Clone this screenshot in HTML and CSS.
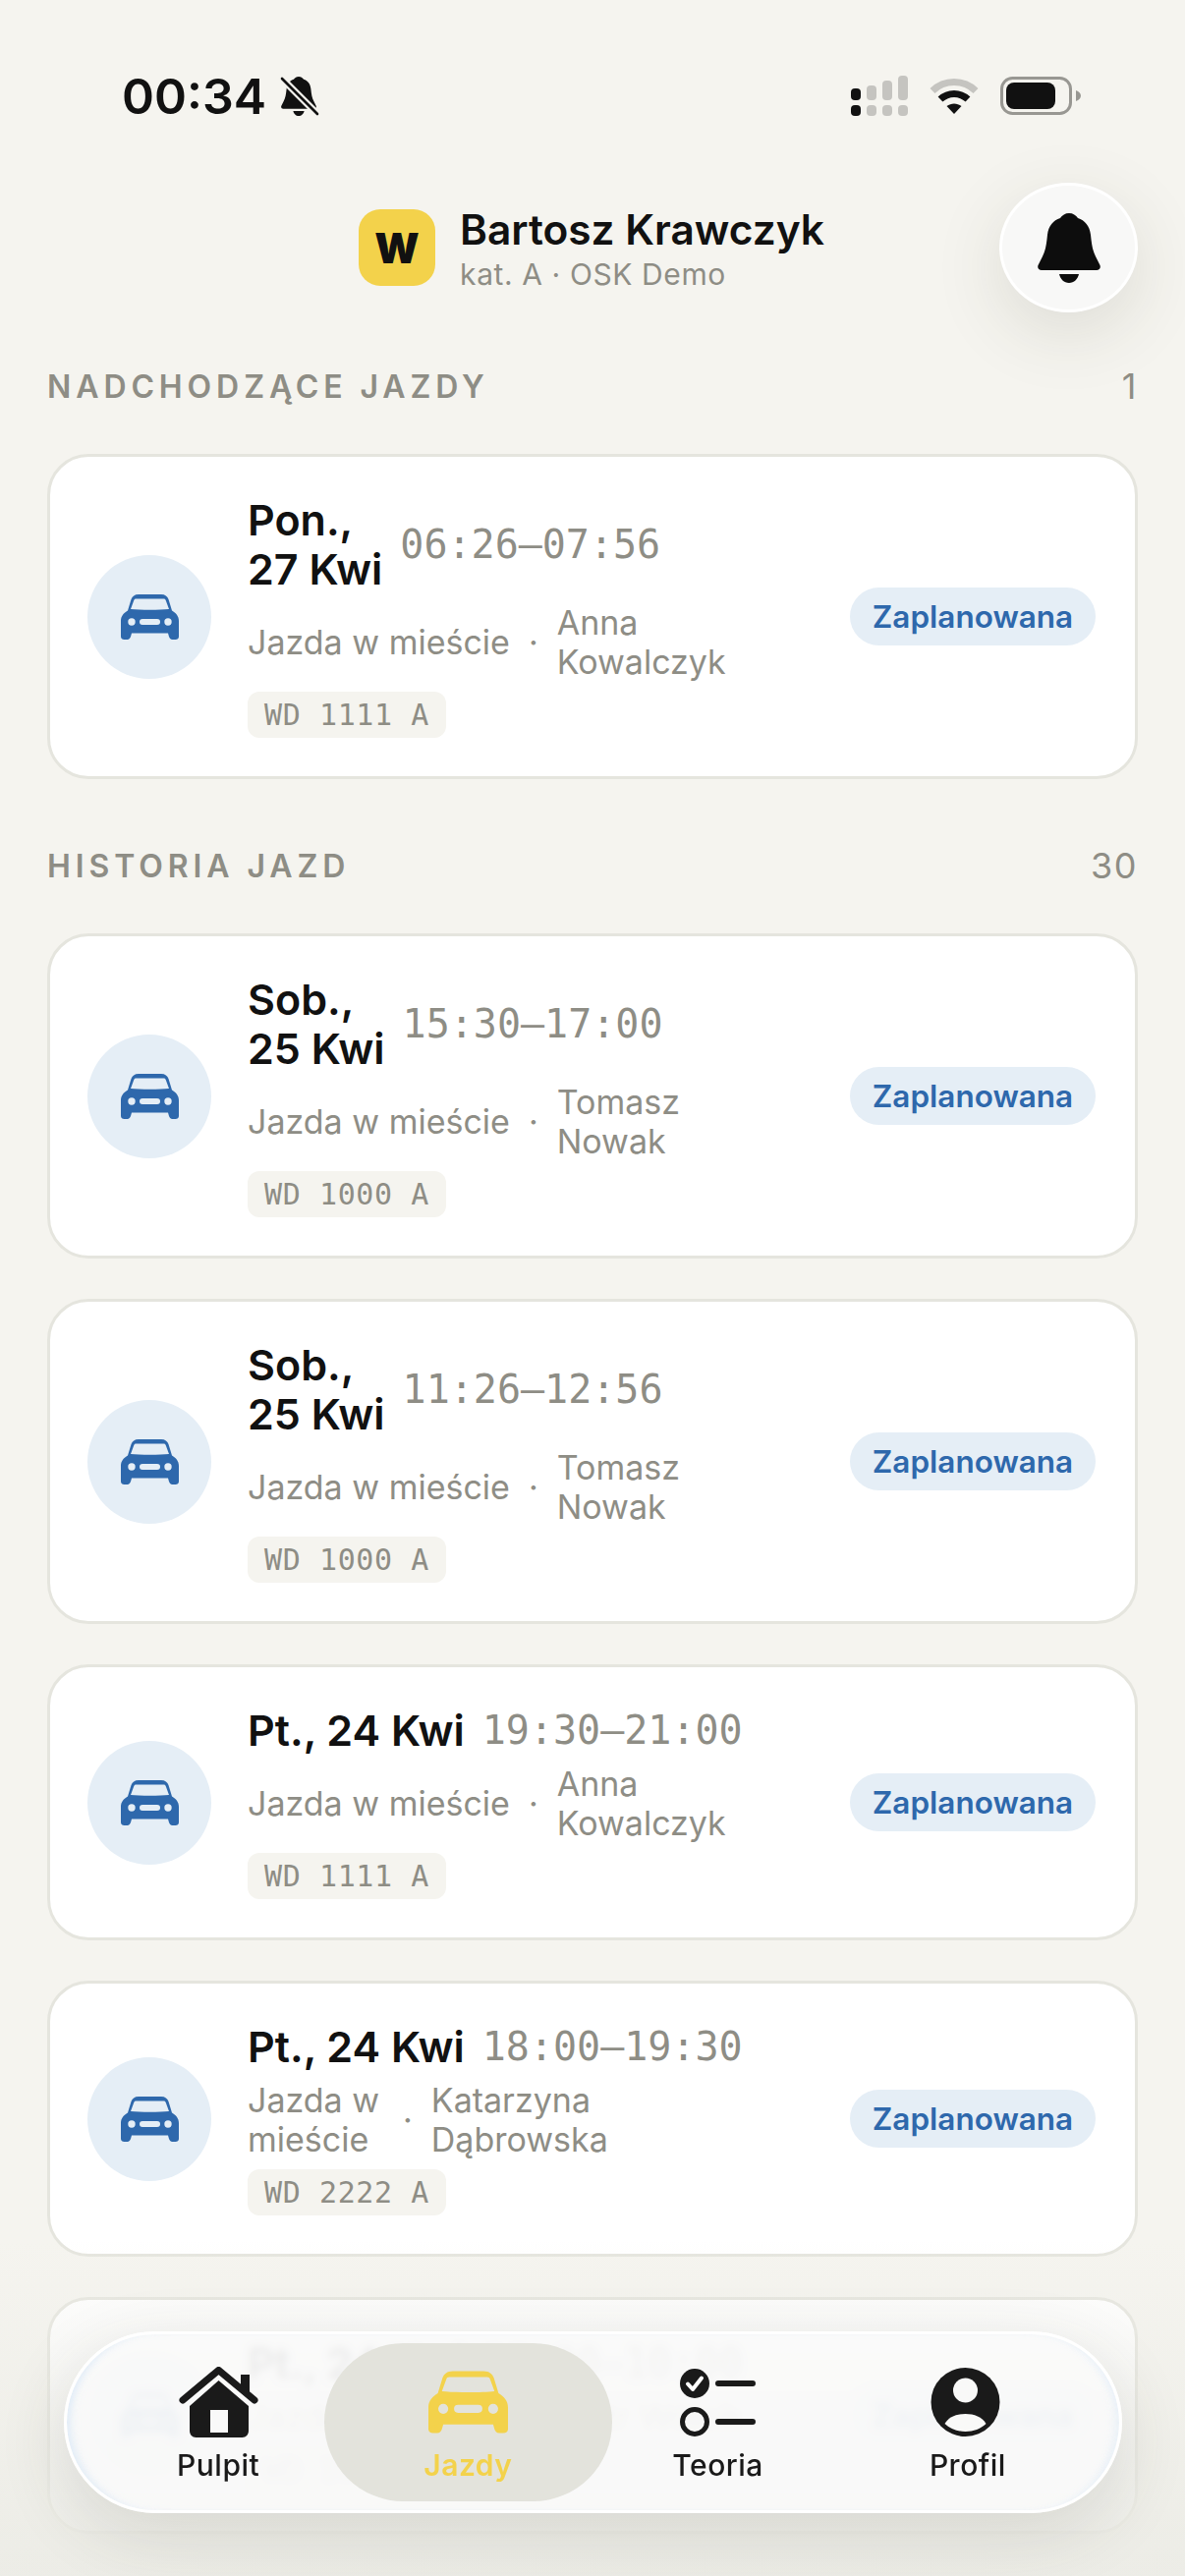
FILE: index.html
```html
<!DOCTYPE html>
<html lang="pl">
<head>
    <meta charset="UTF-8">
    <meta name="viewport" content="width=device-width, initial-scale=1.0">
    <title>Jazdy</title>
    <link rel="stylesheet" href="styles.css">
</head>
<body>
    <svg class="defs" width="0" height="0">
        <symbol id="car" viewBox="0 0 59 46">
            <path fill="currentColor" fill-rule="evenodd" d="M18 0H41C45 0 47.5 2 48.5 5L52 16.5C56 19 59 22 59 27V43C59 45 57.5 46 55.5 46H52.5C50.5 46 49.5 44.5 49 43L48 39.5H11L10 43C9.5 44.5 8.5 46 6.5 46H3.5C1.5 46 0 45 0 43V27C0 22 3 19 7 16.5L10.5 5C11.5 2 14 0 18 0ZM15.5 4.5C14.2 4.5 13.6 5 13.2 6.2L10 15C19 16 40 16 49 15L45.8 6.2C45.4 5 44.8 4.5 43.5 4.5ZM11 24.3A3.7 3.7 0 1 0 11 31.7A3.7 3.7 0 1 0 11 24.3ZM48 24.3A3.7 3.7 0 1 0 48 31.7A3.7 3.7 0 1 0 48 24.3ZM22 25A3 3 0 0 0 22 31H37A3 3 0 0 0 37 25Z"/>
        </symbol>
        <symbol id="bell" viewBox="0 0 64 71">
            <path fill="currentColor" d="M32 0C36 0 39 2 41 5C48 7 53 13 54 22C55 32 56 38 59 44L63 52C65 55 63 58 60 58H4C1 58 -1 55 1 52L5 44C8 38 9 32 10 22C11 13 16 7 23 5C25 2 28 0 32 0ZM22 62H42C41 67 37 71 32 71C27 71 23 67 22 62Z"/>
        </symbol>
    </svg>

    <div class="status-bar">
        <div class="status-left">
            <span class="clock">00:34</span>
            <svg class="mute" viewBox="0 0 40 42">
                <use href="#bell" x="1" y="1" width="36" height="40"/>
                <path d="M2 3L38 39" stroke="#f5f4ef" stroke-width="7"/>
                <path d="M2 3L38 39" stroke="#111" stroke-width="2.6" stroke-linecap="round"/>
            </svg>
        </div>
        <div class="status-right">
            <svg class="signal" viewBox="0 0 58 41">
                <g fill="#c5c4c0">
                    <rect x="16" y="10" width="10" height="15" rx="4"/>
                    <rect x="32" y="5" width="10" height="20" rx="4"/>
                    <rect x="48" y="0" width="10" height="25" rx="4"/>
                    <rect x="16" y="30" width="10" height="11" rx="4"/>
                    <rect x="32" y="30" width="10" height="11" rx="4"/>
                    <rect x="48" y="30" width="10" height="11" rx="4"/>
                </g>
                <rect x="0" y="13" width="10" height="12" rx="4" fill="#111"/>
                <rect x="0" y="30" width="10" height="11" rx="4" fill="#111"/>
            </svg>
            <svg class="wifi" viewBox="0 0 50 37">
                <path d="M3 13.5C15 1.5 35 1.5 47 13.5" fill="none" stroke="#c5c4c0" stroke-width="7"/>
                <path d="M11 22C19 14.5 31 14.5 39 22" fill="none" stroke="#111" stroke-width="7"/>
                <path d="M17.5 29C22 25.5 28 25.5 32.5 29L25 37Z" fill="#111"/>
            </svg>
            <svg class="battery" viewBox="0 0 82 39">
                <rect x="1.5" y="1.5" width="70" height="36" rx="11" fill="none" stroke="#989792" stroke-width="3"/>
                <rect x="6" y="6" width="50" height="27" rx="8" fill="#111"/>
                <path d="M77 14C80 15 82 17 82 19.5C82 22 80 24 77 25Z" fill="#989792"/>
            </svg>
        </div>
    </div>

    <header class="top">
        <div class="user">
            <div class="avatar">W</div>
            <div>
                <div class="user-name">Bartosz Krawczyk</div>
                <div class="user-sub">kat. A · OSK Demo</div>
            </div>
        </div>
        <button class="bell-btn"><svg class="bell-icon"><use href="#bell"/></svg></button>
    </header>

    <main class="list">
        <div class="section-head">
            <span class="section-title">NADCHODZĄCE JAZDY</span>
            <span class="section-count">1</span>
        </div>

        <div class="card">
            <div class="car-circle"><svg class="car"><use href="#car"/></svg></div>
            <div class="card-body">
                <div class="when"><span class="date">Pon.,<br>27 Kwi</span><span class="time">06:26–07:56</span></div>
                <div class="meta"><span>Jazda w mieście</span><i>·</i><span>Anna<br>Kowalczyk</span></div>
                <span class="plate">WD 1111 A</span>
            </div>
            <span class="badge">Zaplanowana</span>
        </div>

        <div class="section-head later">
            <span class="section-title">HISTORIA JAZD</span>
            <span class="section-count">30</span>
        </div>

        <div class="card">
            <div class="car-circle"><svg class="car"><use href="#car"/></svg></div>
            <div class="card-body">
                <div class="when"><span class="date">Sob.,<br>25 Kwi</span><span class="time">15:30–17:00</span></div>
                <div class="meta"><span>Jazda w mieście</span><i>·</i><span>Tomasz<br>Nowak</span></div>
                <span class="plate">WD 1000 A</span>
            </div>
            <span class="badge">Zaplanowana</span>
        </div>

        <div class="card">
            <div class="car-circle"><svg class="car"><use href="#car"/></svg></div>
            <div class="card-body">
                <div class="when"><span class="date">Sob.,<br>25 Kwi</span><span class="time">11:26–12:56</span></div>
                <div class="meta"><span>Jazda w mieście</span><i>·</i><span>Tomasz<br>Nowak</span></div>
                <span class="plate">WD 1000 A</span>
            </div>
            <span class="badge">Zaplanowana</span>
        </div>

        <div class="card">
            <div class="car-circle"><svg class="car"><use href="#car"/></svg></div>
            <div class="card-body">
                <div class="when"><span class="date">Pt., 24 Kwi</span><span class="time">19:30–21:00</span></div>
                <div class="meta"><span>Jazda w mieście</span><i>·</i><span>Anna<br>Kowalczyk</span></div>
                <span class="plate">WD 1111 A</span>
            </div>
            <span class="badge">Zaplanowana</span>
        </div>

        <div class="card">
            <div class="car-circle"><svg class="car"><use href="#car"/></svg></div>
            <div class="card-body">
                <div class="when"><span class="date">Pt., 24 Kwi</span><span class="time">18:00–19:30</span></div>
                <div class="meta"><span class="activity-wrapped">Jazda w<br>mieście</span><i>·</i><span>Katarzyna<br>Dąbrowska</span></div>
                <span class="plate">WD 2222 A</span>
            </div>
            <span class="badge">Zaplanowana</span>
        </div>

        <div class="card">
            <div class="car-circle"><svg class="car"><use href="#car"/></svg></div>
            <div class="card-body">
                <div class="when"><span class="date">Pt., 24 Kwi</span><span class="time">08:30–10:00</span></div>
                <div class="meta"><span>Jazda w mieście</span><i>·</i><span>Piotr Wójcik</span></div>
                <span class="plate">WD 1000 A</span>
            </div>
            <span class="badge">Zaplanowana</span>
        </div>
    </main>

    <div class="bottom-fade"></div>

    <nav class="tabbar">
        <div class="tab">
            <svg class="tab-icon" viewBox="0 0 81 72">
                <path fill="#1a1a1a" fill-rule="evenodd" d="M40.5 14L71 40V65C71 69 68.5 72 64.5 72H17.5C13.5 72 11 69 11 65V40ZM32 44V67H50V44Z"/>
                <path fill="#1a1a1a" d="M63 8H72V28L63 20Z"/>
                <path fill="none" stroke="#1a1a1a" stroke-width="7" stroke-linecap="round" stroke-linejoin="round" d="M4 34L40.5 3.5L77 34"/>
            </svg>
            <span>Pulpit</span>
        </div>
        <div class="tab active">
            <svg class="tab-car"><use href="#car"/></svg>
            <span>Jazdy</span>
        </div>
        <div class="tab">
            <svg class="tab-icon" viewBox="0 0 81 72">
                <circle cx="17" cy="17" r="15" fill="#1a1a1a"/>
                <path d="M10 17.5L15 23L24 11.5" fill="none" stroke="#fff" stroke-width="4" stroke-linecap="round" stroke-linejoin="round"/>
                <circle cx="17" cy="56" r="12.5" fill="none" stroke="#1a1a1a" stroke-width="5"/>
                <path d="M41 17H76M41 56H76" stroke="#1a1a1a" stroke-width="6" stroke-linecap="round"/>
            </svg>
            <span>Teoria</span>
        </div>
        <div class="tab">
            <svg class="tab-icon" viewBox="-3 -1 80 72">
                <circle cx="35" cy="35" r="35" fill="#1a1a1a"/>
                <circle cx="35" cy="23" r="12.5" fill="#f9f9f8"/>
                <path fill="#f9f9f8" d="M14 57C18 50 26 47 35 47C44 47 52 50 56 57C51 62 43 65 35 65C27 65 19 62 14 57Z"/>
            </svg>
            <span>Profil</span>
        </div>
    </nav>
</body>
</html>
```

FILE: styles.css
```css
* {
    box-sizing: border-box;
}

html, body {
    margin: 0;
    height: 2622px;
}

body {
    position: relative;
    overflow: hidden;
    background-color: #f5f4ef;
    color: #111;
    font-family: Inter, "Noto Sans", sans-serif;
}

.defs {
    position: absolute;
}

/* status bar */
.status-bar {
    display: flex;
    justify-content: space-between;
    align-items: flex-start;
    height: 186px;
    padding: 77px 106px 0 124px;
}

.status-left {
    display: flex;
    align-items: center;
    gap: 14px;
}

.clock {
    font-size: 50px;
    font-weight: 600;
    line-height: 42px;
}

.mute {
    width: 40px;
    height: 42px;
    color: #111;
}

.status-right {
    display: flex;
    align-items: center;
    gap: 22px;
}

.signal {
    width: 58px;
    height: 41px;
}

.wifi {
    width: 50px;
    height: 37px;
}

.battery {
    width: 82px;
    height: 39px;
}

/* header */
.top {
    display: flex;
    justify-content: center;
    position: relative;
    height: 132px;
    padding: 27px 2px 0 0;
}

.user {
    display: flex;
    gap: 25px;
    height: 78px;
    align-items: center;
}

.avatar {
    width: 78px;
    height: 78px;
    border-radius: 22px;
    background-color: #f3d24b;
    color: #111;
    font-size: 42px;
    font-weight: 900;
    display: flex;
    align-items: center;
    justify-content: center;
}

.user-name {
    font-size: 42.4px;
    font-weight: 600;
    line-height: 50px;
    padding-top: 3px;
}

.user-sub {
    font-size: 30px;
    line-height: 38px;
    letter-spacing: 0.6px;
    color: #8e8d85;
    margin-top: 1px;
}

.bell-btn {
    position: absolute;
    top: 0;
    right: 48px;
    width: 141px;
    height: 132px;
    border: 3px solid #fff;
    border-radius: 50%;
    background-color: #f8f8f7;
    box-shadow: 0 20px 70px rgba(60, 60, 40, 0.13);
    color: #0d0d0d;
    display: flex;
    align-items: center;
    justify-content: center;
    padding: 0;
}

.bell-icon {
    width: 64px;
    height: 71px;
}

/* list */
.list {
    padding: 55px 48px 0;
    display: flex;
    flex-direction: column;
    gap: 41px;
}

.section-head {
    display: flex;
    justify-content: space-between;
    align-items: center;
    height: 40px;
    margin-bottom: 8px;
}

.section-head.later {
    margin-top: 27px;
}

.section-title {
    font-size: 32px;
    font-weight: 600;
    letter-spacing: 4.9px;
    color: #8e8d85;
}

.section-count {
    font-size: 36px;
    letter-spacing: 1.5px;
    color: #8e8d85;
}

.card {
    display: flex;
    align-items: center;
    gap: 37px;
    padding: 39px 40px 39px 38px;
    background-color: #fff;
    border: 3px solid #e5e5de;
    border-radius: 42px;
}

.car-circle {
    flex: none;
    width: 126px;
    height: 126px;
    border-radius: 50%;
    background-color: #e5eef6;
    color: #2e68ac;
    display: flex;
    align-items: center;
    justify-content: center;
}

.car {
    width: 59px;
    height: 46px;
}

.card-body {
    flex: 1;
    display: flex;
    flex-direction: column;
    align-items: flex-start;
    gap: 10px;
}

.when {
    display: flex;
    align-items: center;
    gap: 18px;
}

.date {
    font-size: 43px;
    font-weight: 600;
    line-height: 50px;
}

.time {
    font-family: "DejaVu Sans Mono", monospace;
    font-size: 40px;
    color: #8e8d85;
}

.meta {
    display: flex;
    align-items: center;
    gap: 19px;
    font-size: 34px;
    line-height: 40px;
    color: #8e8d85;
}

.meta i {
    font-style: normal;
}

.activity-wrapped {
    width: 139px;
}

.plate {
    font-family: "DejaVu Sans Mono", monospace;
    font-size: 30px;
    line-height: 47px;
    letter-spacing: 0.6px;
    padding: 0 17px;
    border-radius: 12px;
    background-color: #f5f4ef;
    color: #8e8d85;
}

.badge {
    flex: none;
    width: 250px;
    height: 59px;
    border-radius: 30px;
    background-color: #e5eef6;
    color: #2e68ac;
    font-size: 31.5px;
    font-weight: 600;
    line-height: 59px;
    text-align: center;
}

/* bottom fade + tab bar */
.bottom-fade {
    position: absolute;
    left: 0;
    right: 0;
    top: 2280px;
    bottom: 0;
    background: linear-gradient(to bottom, rgba(238, 238, 232, 0), rgba(238, 238, 232, 0.2) 18%, rgba(236, 236, 230, 0.92) 95%);
}

.tabbar {
    position: absolute;
    left: 65px;
    top: 2373px;
    width: 1077px;
    height: 185px;
    display: grid;
    grid-template-columns: repeat(4, 1fr);
    padding: 9px 27px;
    border: 3px solid #fff;
    border-radius: 93px;
    background-color: rgba(250, 250, 250, 0.9);
    backdrop-filter: blur(4px);
    box-shadow: 0 20px 70px rgba(60, 60, 40, 0.14),
        inset 9px 0 8px -5px rgba(205, 225, 245, 0.6),
        inset -9px 0 8px -5px rgba(205, 225, 245, 0.4);
}

.tab {
    display: flex;
    flex-direction: column;
    align-items: center;
    justify-content: flex-start;
    padding-top: 24px;
    font-size: 30px;
    font-weight: 500;
    letter-spacing: 0.5px;
    color: #1a1a1a;
}

.tab span {
    margin-top: 9px;
    line-height: 38px;
}

.tab-icon {
    width: 81px;
    height: 72px;
}

.tab.active {
    margin: 0 -19px;
    border-radius: 81px;
    background-color: #e3e3dc;
    color: #f3d24b;
    font-weight: 600;
}

.tab-car {
    width: 81px;
    height: 64px;
    margin-top: 4px;
    margin-bottom: 4px;
}
```
